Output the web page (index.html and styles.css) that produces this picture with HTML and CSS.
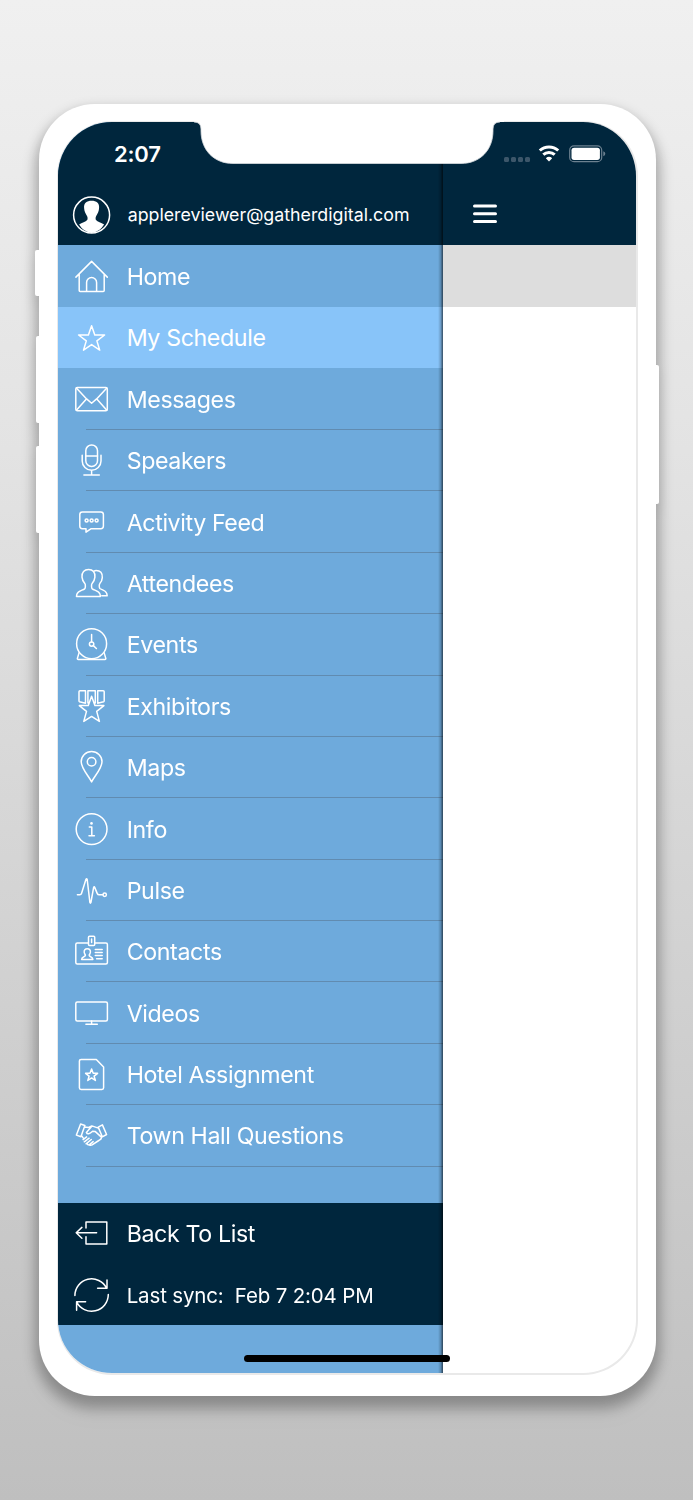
FILE: index.html
```
<!DOCTYPE html>
<html lang="en">
<head>
<meta charset="utf-8">
<title>Event menu</title>
<link rel="stylesheet" href="styles.css">
</head>
<body>
<main class="phone">
  <span class="key key-mute"></span><span class="key key-up"></span><span class="key key-down"></span><span class="key key-power"></span>
  <div class="screen">
    <aside class="drawer">
      <header class="account">
        <svg class="icon" viewBox="0 0 40 40"><circle cx="20" cy="20" r="18"/><path class="solid" d="M20 5.600C24.800 5.600 28 7.700 27.500 13c-.2 3-1.300 5.700-2.900 7.800-.7 1-.8 3.200-.2 4 1.500 2.200 5.200 2.500 8.100 4.500A18 18 0 0 1 20 38 18 18 0 0 1 7.500 29.300c2.900-2 6.600-2.300 8.100-4.500.6-.8.500-3-.2-4-1.600-2.100-2.700-4.800-2.900-7.800-.5-5.300 2.700-7.400 7.500-7.400z"/></svg>
        <span class="email">applereviewer@gatherdigital.com</span>
      </header>
      <nav class="menu">
        <a class="item plain"><svg class="icon" viewBox="0 0 40 40"><path d="M4.300 21 20 5.300 35.700 21M7.600 18v16.500q0 1 1 1h23q1 0 1-1V18M15 35.500v-9a5 5 0 0 1 10 0v9"/></svg><span>Home</span></a>
        <a class="item plain active"><svg class="icon" viewBox="0 0 40 40"><path d="M20 8.600 23.200 17.900H33L25.300 23.800 28.100 33 20 27.500 11.900 33 14.700 23.800 7 17.900H16.800z"/></svg><span>My Schedule</span></a>
        <a class="item"><svg class="icon" viewBox="0 0 40 40"><rect x="4.200" y="8.400" width="31.500" height="23.300" rx="1.500"/><path d="m5 9.200 10 10.600 5 4.400 5-4.400L35 9.200M5 31l9.800-11.200M35 31l-9.800-11.200"/></svg><span>Messages</span></a>
        <a class="item"><svg class="icon" viewBox="0 0 40 40"><rect x="14.200" y="4.800" width="11.700" height="21.600" rx="5.800"/><path d="M14.200 15.800h11.700M10.600 15.200v5.600a9.400 9.400 0 0 0 18.800 0v-5.600M20 30.200v4.600M12.300 34.800h15.400"/></svg><span>Speakers</span></a>
        <a class="item"><svg class="icon" viewBox="0 0 40 40"><path d="M10.800 9.900h18.400q2.600 0 2.600 2.600V24q0 2.600-2.600 2.600H19.600l-5.200 3.500v-3.500h-3.600Q8.200 26.600 8.200 24V12.500q0-2.600 2.600-2.600z"/><circle cx="15" cy="18.400" r="1.500"/><circle cx="20" cy="18.400" r="1.500"/><circle cx="25" cy="18.400" r="1.500"/></svg><span>Activity Feed</span></a>
        <a class="item"><svg class="icon" viewBox="0 0 40 40"><path d="M17 6.500c4.300 0 6.700 2.600 6.300 7.500-.2 2.800-1.300 4.600-2.800 6.300-.8 1-.8 4.500.2 5.500 1.900 1.500 6.700 1.800 7.700 5.200l.4 2.300H4.900l.4-2.300c1-3.400 5.800-3.700 7.700-5.200 1-1 1-4.500.2-5.500-1.500-1.700-2.600-3.500-2.800-6.300-.4-4.900 2.300-7.500 6.600-7.500zM22.300 8c.9-.5 1.500-.7 2.200-.7 4.300 0 6.500 2.400 6.200 7.200-.2 2.700-1.100 4.500-2.500 6-.8 1-.7 4 .1 4.900 1.800 1.400 5.800 1.600 6.900 5.100l.4 2.200h-5.400"/></svg><span>Attendees</span></a>
        <a class="item"><svg class="icon" viewBox="0 0 40 40"><circle cx="20" cy="19.600" r="15"/><circle cx="20" cy="20" r="2.200"/><path d="M20 10.500v7.300M21.700 21.500l3.100 2.900M7.500 28.500 5.800 34.300q-.2 1 .8 1h26.800q1 0 .8-1l-1.700-5.800"/></svg><span>Events</span></a>
        <a class="item"><svg class="icon" viewBox="0 0 40 40"><path d="M13.900 4.700v12.500l-6-1.500q-.5-.2-.5-1V5.700q0-1 1-1zM26.100 4.700v12.500l6-1.500q.5-.2.500-1V5.700q0-1-1-1zM16.300 17V4.700h7.400V17M20 10.200l3.300 9.300h9L25.100 25.300 27.800 35.300 20 30.300 12.200 35.300 14.900 25.300 7.700 19.500h9z"/></svg><span>Exhibitors</span></a>
        <a class="item"><svg class="icon" viewBox="0 0 40 40"><path d="M20 4.500c5.700 0 10.400 4.300 10.400 10.200C30.400 21.500 22.800 29 20 34.800 17.200 29 9.600 21.500 9.600 14.700 9.600 8.800 14.300 4.500 20 4.500z"/><circle cx="20" cy="14.600" r="4.300"/></svg><span>Maps</span></a>
        <a class="item"><svg class="icon" viewBox="0 0 40 40"><circle cx="20" cy="20" r="15.400"/><path d="M17.700 18h2.500v8.500M17.400 26.600h5.400"/><circle class="solid" cx="19.900" cy="14.300" r="1.300"/></svg><span>Info</span></a>
        <a class="item"><svg class="icon" viewBox="0 0 40 40"><path d="M5.800 24.700h2.400q1.300 0 1.700-1.200L14.300 9.400q.7-1.500 1.300 0l2.700 23q.5 1.300 1 0L22 17.500q.6-1.500 1.200 0l2.500 6q.5 1.200 1.800 1.200h3.800"/><circle cx="33.100" cy="24.700" r="1.700"/></svg><span>Pulse</span></a>
        <a class="item"><svg class="icon" viewBox="0 0 40 40"><path d="M16.600 11.800H5.700q-1.500 0-1.500 1.500v18.200q0 1.500 1.500 1.500h28.600q1.500 0 1.500-1.500V13.300q0-1.500-1.500-1.500H23.400M20 7.800v3.600M23.700 18.400h6.900M23.700 21.500h6.900M23.700 24.500h6.900M25 27.600h5.600"/><rect x="16.900" y="5.200" width="6.200" height="9.300" rx="1"/><path d="M15.700 17.700c2.300 0 3.300 1.500 3.100 3.500-.1 1.500-1.200 2.200-1.200 3 0 1.900 3.700.8 3.700 4.200H10c0-3.400 3.800-2.300 3.800-4.200 0-.8-1.100-1.500-1.200-3-.2-2 .8-3.500 3.100-3.500z"/></svg><span>Contacts</span></a>
        <a class="item"><svg class="icon" viewBox="0 0 40 40"><rect x="4.200" y="8.800" width="31.600" height="19" rx="1.500"/><path d="M20 27.800v3.300M14.300 31.200h11.400"/></svg><span>Videos</span></a>
        <a class="item"><svg class="icon" viewBox="0 0 40 40"><path d="M9.500 5.300h15.200l7.300 7.600v20.700q0 1.700-1.700 1.700H9.500q-1.700 0-1.700-1.700V7q0-1.700 1.700-1.700z"/><path d="m20 14.900 1.600 4.300H26l-3.500 2.900 1.300 4.300-3.800-2.600-3.800 2.600 1.300-4.300L14 19.200h4.400z"/></svg><span>Hotel Assignment</span></a>
        <a class="item"><svg class="icon" viewBox="0 0 40 40"><path d="m9 8.900 4.300 1.500L9.300 21.600 4.800 20zM26.600 12l4.200-2.200L35 19.400l-4.300 2.300zM13 12l4 .4 3.200-1.600 6.600 2.200M10 20.500l1.700 2.500M20 11.400l-5.200 6c.8 2.200 3.400 1.600 6.200-1.300l2.500.2 6.300 5.700c.5 2-1.300 2.600-2.600 3.400l-6.700 4.400c-1.300.8-4.600.2-5-1.200M11.500 24.500l3.500-2.700M12.700 26.700l4.800-3.600M14.500 28.700l5.200-4.300M17.600 29.800l3.900-3.300"/></svg><span>Town Hall Questions</span></a>
      </nav>
      <footer class="tools">
        <a class="item plain"><svg class="icon" viewBox="0 0 40 40"><path d="M14.400 15V8.800h20.800v22H14.400v-7.200M25 19.700H4.600M10.300 14.300l-5.700 5.400 5.700 5.500"/></svg><span>Back To List</span></a>
        <a class="item plain sync"><svg class="icon" viewBox="0 0 40 40"><path d="M3.300 20.500A16.700 16.700 0 0 1 35 13.100M35.400 4.800v8.400H26M36.700 19.500A16.700 16.700 0 0 1 5 26.800M5 35.200v-8.500h9"/></svg><span>Last sync:&nbsp; Feb 7 2:04 PM</span></a>
      </footer>
    </aside>
    <section class="page">
      <header class="bar"><svg class="burger" viewBox="0 0 24 20"><path d="M1.500 2h21M1.500 9.700h21M1.500 17.400h21"/></svg></header>
      <div class="strip"></div>
    </section>
    <div class="time">2:07</div>
    <svg class="status" viewBox="0 0 104 20"><g class="dots"><rect x="0" y="13" width="5" height="5" rx="1.500"/><rect x="7" y="13" width="5" height="5" rx="1.500"/><rect x="14" y="13" width="5" height="5" rx="1.500"/><rect x="21" y="13" width="5" height="5" rx="1.500"/></g><g class="wifi"><path d="M35.800 6.500a13.500 13.500 0 0 1 18.400 0M39.300 10.700a8.400 8.400 0 0 1 11.400 0"/><path class="solid" d="m45 17.500-3.200-3.200a4.800 4.800 0 0 1 6.400 0z"/></g><rect class="battery" x="65.700" y="1.900" width="32" height="15.800" rx="4.300"/><rect class="charge" x="67.500" y="3.700" width="28.400" height="12.200" rx="2.600"/><path class="cap" d="M99.300 7.300q2 .8 2 2.500t-2 2.500z"/></svg>
    <div class="home-bar"></div>
  </div>
  <svg class="notch" viewBox="0 0 310 43"><path class="fill" d="M0 0H310V1H306Q299 1 299 8V10C299 29 286 42.500 267 42.500H39C20 42.500 7 29 7 10V8Q7 1 0 1z"/><path class="edge" d="M0 1Q7 1 7 8V10C7 29 20 42.500 39 42.500H267C286 42.500 299 29 299 10V8Q299 1 306 1"/></svg>
</main>
</body>
</html>
```
FILE: styles.css
```
* { box-sizing: border-box; }
body {
  margin: 0;
  height: 1500px;
  padding: 104px 37px 0 39px;
  overflow: hidden;
  background: linear-gradient(#f0f0f0, #e3e3e3 30%, #bfbfbf);
  font-family: Inter, "Liberation Sans", sans-serif;
  color: #fff;
}
.phone {
  position: relative;
  width: 617px;
  height: 1292px;
  padding: 17px 18px 21px;
  border-radius: 56px;
  background: #fff;
  box-shadow: 0 9px 13px 5px rgba(0, 0, 0, .2);
  filter: drop-shadow(0 7px 6px rgba(0, 0, 0, .13));
}
.key { position: absolute; width: 8px; border-radius: 2px; background: #fff; }
.key-mute { left: -4px; top: 146px; height: 46px; }
.key-up { left: -3px; top: 232px; height: 87px; }
.key-down { left: -3px; top: 342px; height: 87px; }
.key-power { right: -3px; top: 261px; height: 139px; }
.screen {
  position: relative;
  display: flex;
  width: 581px;
  height: 1254px;
  border: solid #e9e9e9;
  border-width: 1px 2px 2px 1px;
  border-radius: 55px;
  overflow: hidden;
  background: #fff;
}
.drawer {
  position: relative;
  display: flex;
  flex-direction: column;
  width: 385px;
  background: #6eaadc;
}
.drawer::after {
  content: "";
  position: absolute;
  inset: 0 0 0 auto;
  width: 5px;
  background: linear-gradient(90deg, transparent, rgba(0, 0, 0, .18) 50%, rgba(0, 0, 0, .6));
}
.account {
  display: flex;
  align-items: center;
  gap: 16px;
  height: 123.3px;
  padding: 62.500px 0 0 13.700px;
  background: #00263d;
}
.icon {
  flex: none;
  width: 40px;
  height: 40px;
  fill: none;
  stroke: #fff;
  stroke-width: 1.5;
  stroke-linejoin: round;
  stroke-linecap: round;
  transform: translate(-.4px, .1px);
}
.solid { fill: #fff; stroke: none; }
.email { font-size: 17.800px; white-space: nowrap; }
.menu { flex: none; }
.item {
  position: relative;
  display: flex;
  align-items: center;
  gap: 15px;
  height: 61.400px;
  padding-left: 13.700px;
  font-size: 23.200px;
  letter-spacing: -.38px;
  white-space: nowrap;
}
.item span { padding-top: 2px; }
.item::after {
  content: "";
  position: absolute;
  right: 0;
  bottom: -.5px;
  left: 28px;
  height: 1px;
  background: #618bb0;
}
.plain::after { display: none; }
.active { background: #88c4f9; }
.tools { margin-top: 36.500px; background: #00263d; }
.sync { font-size: 20.500px; letter-spacing: -.16px; }
.page { flex: 1; }
.bar { height: 123.300px; padding: 82px 0 0 30px; background: #00263d; }
.burger { display: block; width: 24px; height: 20px; fill: none; stroke: #fff; stroke-width: 3; stroke-linecap: round; }
.strip { height: 61.400px; background: #ddd; }
.time { position: absolute; left: 56px; top: 19px; font-size: 22px; line-height: 27px; font-weight: 600; letter-spacing: -.2px; }
.status { position: absolute; left: 446px; top: 22px; width: 104px; height: 20px; }
.dots { fill: #3c566a; }
.wifi { fill: none; stroke: #fff; stroke-width: 3; }
.battery { fill: none; stroke: #6c8190; stroke-width: 1.2; }
.charge { fill: #fff; }
.cap { fill: #6c8190; }
.home-bar { position: absolute; left: 186px; bottom: 11px; width: 206px; height: 7px; border-radius: 4px; background: #000; }
.notch { position: absolute; left: 155px; top: 17px; width: 310px; height: 43px; }
.notch .fill { fill: #fff; }
.notch .edge { fill: none; stroke: #d8dcdf; stroke-width: .8; }
```
